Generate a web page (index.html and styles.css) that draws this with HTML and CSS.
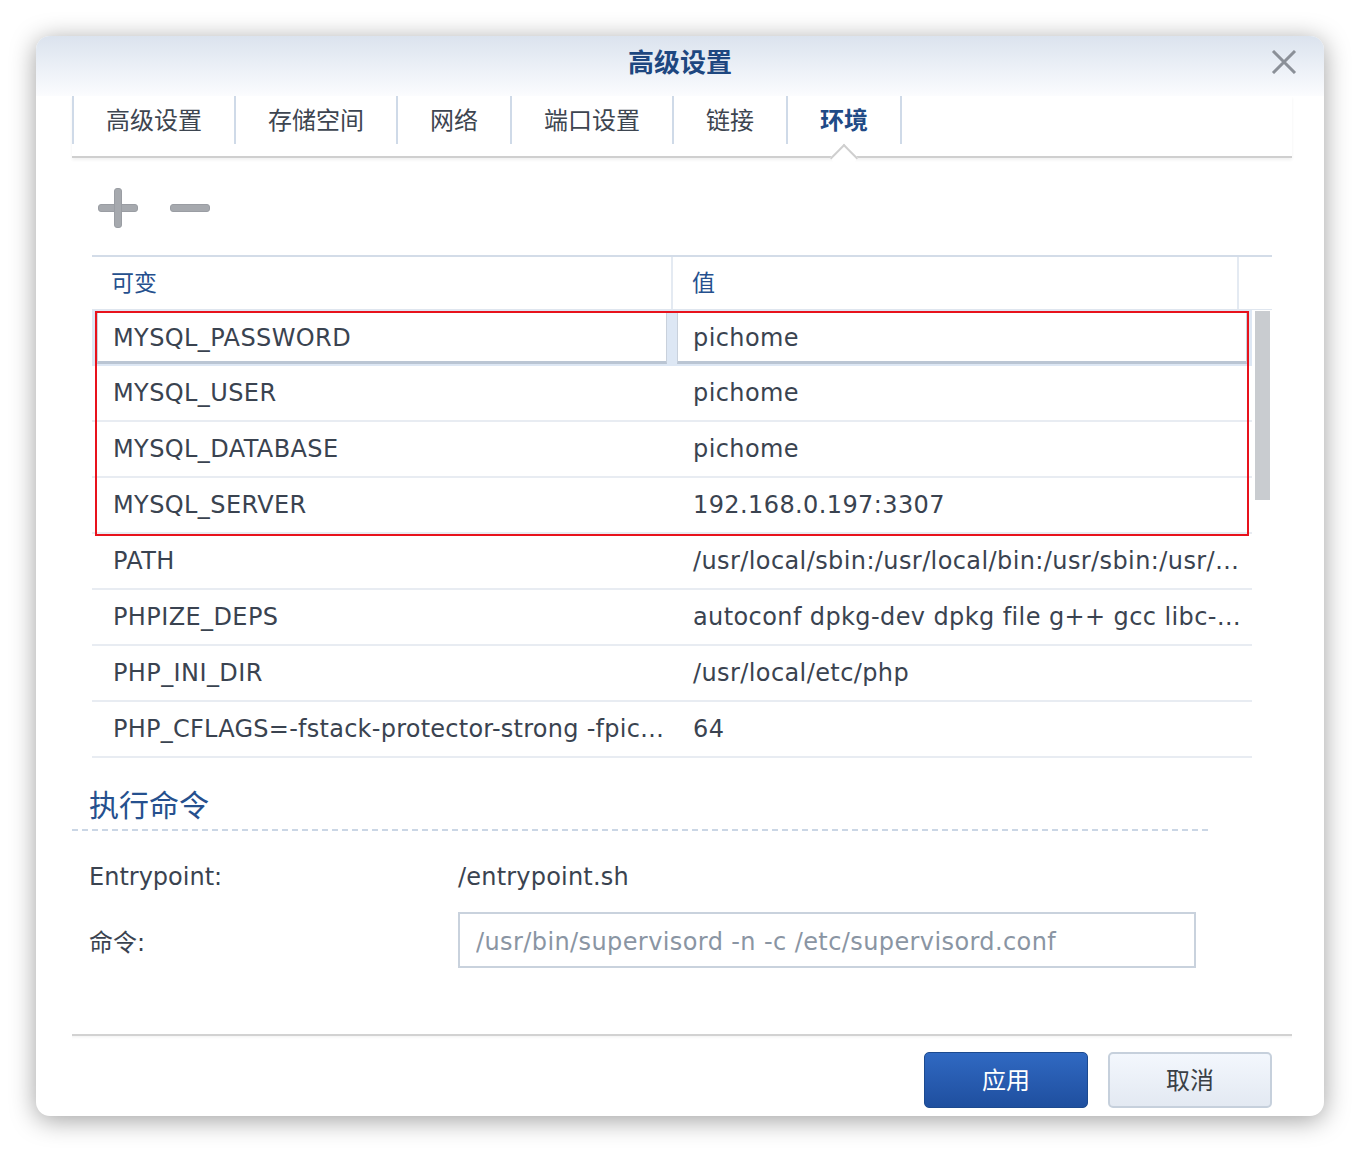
FILE: index.html
```html
<!DOCTYPE html>
<html lang="zh-CN">
<head>
<meta charset="utf-8">
<title>高级设置</title>
<link rel="stylesheet" href="styles.css">
</head>
<body>
<div class="dialog">
  <div class="titlebar">
    <span class="title">高级设置</span>
    <button class="close" aria-label="关闭">
      <svg width="26" height="24" viewBox="0 0 26 24"><path d="M2 1 L24 23 M24 1 L2 23" stroke="#8b9098" stroke-width="3" fill="none"/></svg>
    </button>
  </div>

  <div class="tabs">
    <div class="tab">高级设置</div>
    <div class="tab">存储空间</div>
    <div class="tab">网络</div>
    <div class="tab">端口设置</div>
    <div class="tab">链接</div>
    <div class="tab active">环境</div>
  </div>

  <div class="content">
    <div class="toolbar">
      <span class="icon-btn">
        <svg width="40" height="40" viewBox="0 0 40 40"><rect x="0.5" y="16.5" width="39" height="7" rx="2.5" fill="#a6a9ae" stroke="#9a9da3" stroke-width="1"/><rect x="16.5" y="0.5" width="7" height="39" rx="2.5" fill="#a6a9ae" stroke="#9a9da3" stroke-width="1"/></svg>
      </span>
      <span class="icon-btn">
        <svg width="40" height="40" viewBox="0 0 40 40"><rect x="0.5" y="16.5" width="39" height="7" rx="2.5" fill="#a6a9ae" stroke="#9a9da3" stroke-width="1"/></svg>
      </span>
    </div>

    <div class="grid">
      <div class="grid-head">
        <div class="th c1">可变</div>
        <div class="th c2">值</div>
        <div class="th filler"></div>
      </div>
      <div class="grid-body">
        <div class="rows">
          <div class="row editing">
            <div class="cell c1"><div class="edit">MYSQL_PASSWORD</div></div>
            <div class="cell c2"><div class="edit">pichome</div></div>
          </div>
          <div class="row">
            <div class="cell c1">MYSQL_USER</div>
            <div class="cell c2">pichome</div>
          </div>
          <div class="row">
            <div class="cell c1">MYSQL_DATABASE</div>
            <div class="cell c2">pichome</div>
          </div>
          <div class="row">
            <div class="cell c1">MYSQL_SERVER</div>
            <div class="cell c2">192.168.0.197:3307</div>
          </div>
          <div class="row">
            <div class="cell c1">PATH</div>
            <div class="cell c2">/usr/local/sbin:/usr/local/bin:/usr/sbin:/usr/bin:/sbin:/bin</div>
          </div>
          <div class="row">
            <div class="cell c1">PHPIZE_DEPS</div>
            <div class="cell c2">autoconf dpkg-dev dpkg file g++ gcc libc-dev make pkg-config re2c</div>
          </div>
          <div class="row">
            <div class="cell c1">PHP_INI_DIR</div>
            <div class="cell c2">/usr/local/etc/php</div>
          </div>
          <div class="row">
            <div class="cell c1 tight">PHP_CFLAGS=-fstack-protector-strong -fpic -fpie -O2 -D_LARGEFILE_SOURCE -D_FILE_OFFSET_BITS=</div>
            <div class="cell c2">64</div>
          </div>
        </div>
        <div class="scrollbar"><div class="thumb"></div></div>
      </div>
      <div class="highlight"></div>
    </div>

    <div class="section-title">执行命令</div>
    <div class="dashed"></div>

    <div class="form-row first">
      <div class="label">Entrypoint:</div>
      <div class="value">/entrypoint.sh</div>
    </div>
    <div class="form-row">
      <div class="label">命令:</div>
      <input class="text-input" type="text" placeholder="/usr/bin/supervisord -n -c /etc/supervisord.conf">
    </div>
  </div>

  <div class="footer">
    <button class="btn primary">应用</button>
    <button class="btn">取消</button>
  </div>
</div>
</body>
</html>
```
FILE: styles.css
```css
* { box-sizing: border-box; }

html, body {
  margin: 0;
  padding: 0;
  background: #ffffff;
}

body {
  padding: 36px;
  font-family: "DejaVu Sans", "Noto Sans CJK SC", sans-serif;
  color: #3a4350;
}

.dialog {
  position: relative;
  width: 1288px;
  height: 1080px;
  background: #ffffff;
  border-radius: 14px;
  box-shadow: 0 4px 26px rgba(0, 0, 0, 0.38);
  display: flex;
  flex-direction: column;
  overflow: hidden;
}

/* title bar */
.titlebar {
  height: 60px;
  flex: none;
  display: flex;
  align-items: center;
  justify-content: center;
  padding-bottom: 10px;
  background: linear-gradient(#dbe3ee 0%, #eef2f8 60%, #fbfcfe 100%);
}

.title {
  font-family: "Noto Sans CJK SC", sans-serif;
  font-size: 26px;
  font-weight: 700;
  color: #1e4780;
  line-height: 30px;
}

.close {
  position: absolute;
  right: 27px;
  top: 14px;
  width: 26px;
  height: 24px;
  padding: 0;
  border: 0;
  background: none;
  display: flex;
}

/* tabs */
.tabs {
  flex: none;
  margin: 0 32px 0 36px;
  height: 62px;
  display: flex;
  align-items: flex-start;
  border-bottom: 2px solid #cfcfcf;
  box-shadow: 0 2px 3px rgba(0, 0, 0, 0.06);
  position: relative;
}

.tab {
  position: relative;
  height: 48px;
  padding: 0 32px 3px;
  border-left: 2px solid #cfdae8;
  display: flex;
  align-items: center;
  font-family: "Noto Sans CJK SC", sans-serif;
  font-size: 24px;
  color: #3d4550;
}

.tab:last-child {
  border-right: 2px solid #cfdae8;
}

.tab.active {
  color: #1f4a86;
  font-weight: 700;
}

.tab.active::after {
  content: "";
  position: absolute;
  left: 50%;
  top: 52px;
  width: 18px;
  height: 18px;
  margin-left: -10px;
  background: #ffffff;
  border-top: 2px solid #cfcfcf;
  border-left: 2px solid #cfcfcf;
  transform: rotate(45deg);
  z-index: 2;
}

/* content */
.content {
  flex: none;
  margin: 0 32px 0 36px;
  display: flex;
  flex-direction: column;
}

.toolbar {
  margin: 30px 20px 0 26px;
  height: 40px;
  display: flex;
  gap: 32px;
}

.icon-btn {
  width: 40px;
  height: 40px;
  display: flex;
}

/* grid */
.grid {
  position: relative;
  margin: 27px 20px 0 20px;
  font-size: 24px;
  letter-spacing: 0.4px;
}

.grid-head {
  display: flex;
  height: 55px;
  border-top: 2px solid #d3dce8;
  border-bottom: 1px solid #dfe6ef;
}

.th {
  display: flex;
  align-items: center;
  padding: 0 0 5px 19px;
  font-family: "Noto Sans CJK SC", sans-serif;
  font-size: 23px;
  letter-spacing: 0;
  color: #25508e;
}

.th.c1 {
  width: 581px;
  border-right: 2px solid #e4eaf2;
}

.th.c2 {
  width: 566px;
  border-right: 2px solid #e4eaf2;
}

.th.filler {
  flex: 1;
}

.grid-body {
  display: flex;
}

.rows {
  width: 1160px;
}

.row {
  display: flex;
  height: 56px;
  border-bottom: 2px solid #e8ecf2;
}

.cell {
  display: block;
  white-space: nowrap;
  overflow: hidden;
  text-overflow: ellipsis;
  line-height: 28px;
  padding-top: 13px;
}

.cell.c1 {
  width: 581px;
  padding-left: 21px;
  padding-right: 4px;
}

.cell.c1.tight {
  letter-spacing: 0.25px;
}

.cell.c2 {
  flex: 1;
  min-width: 0;
  padding-left: 20px;
  padding-right: 8px;
}

.row.editing {
  background: #dde7f4;
  border-bottom: 0;
}

.row.editing .cell.c1 {
  padding: 2px 6px 0 5px;
}

.row.editing .cell.c2 {
  padding: 2px 5px 0 4px;
}

.edit {
  height: 52px;
  background: #ffffff;
  border: 1px solid #c9d1dc;
  border-bottom: 3px solid #bac5d3;
  padding: 11px 0 0 15px;
  line-height: 28px;
  overflow: hidden;
  white-space: nowrap;
}

.scrollbar {
  width: 20px;
  padding: 1px 2px 0 3px;
}

.thumb {
  height: 189px;
  background: #c9ccd0;
}

.highlight {
  position: absolute;
  left: 3px;
  top: 56px;
  width: 1154px;
  height: 225px;
  border: 2px solid #e8121c;
  pointer-events: none;
}

/* command section */
.section-title {
  margin-top: 25px;
  padding-left: 17px;
  height: 46px;
  line-height: 40px;
  font-family: "Noto Sans CJK SC", sans-serif;
  font-size: 30px;
  color: #25508e;
}

.dashed {
  height: 2px;
  margin-right: 80px;
  background: repeating-linear-gradient(to right, #cad6e5 0 6px, transparent 6px 10px);
}

.form-row {
  display: flex;
  align-items: center;
  height: 56px;
  padding-left: 17px;
  font-size: 24px;
  color: #3a4350;
}

.form-row.first {
  margin-top: 18px;
  margin-bottom: 7px;
}

.label {
  width: 369px;
}

.value {
  letter-spacing: 0.2px;
}

.text-input {
  width: 738px;
  height: 56px;
  border: 2px solid #c9d2dd;
  padding: 3px 0 0 16px;
  font-family: "DejaVu Sans", sans-serif;
  font-size: 24px;
  letter-spacing: 0.4px;
  color: #3a4350;
  background: #ffffff;
  outline: none;
}

.text-input::placeholder {
  color: #8a95a3;
}

/* footer */
.footer {
  flex: none;
  margin: auto 32px 0 36px;
  height: 82px;
  border-top: 2px solid #d2d2d2;
  box-shadow: inset 0 3px 3px -2px rgba(0, 0, 0, 0.06);
  display: flex;
  justify-content: flex-end;
  align-items: flex-start;
  gap: 20px;
  padding: 16px 20px 0 0;
}

.btn {
  width: 164px;
  height: 56px;
  border-radius: 5px;
  border: 2px solid #c6d0dc;
  background: linear-gradient(#f3f7fd, #e3e9f2);
  font-family: "Noto Sans CJK SC", sans-serif;
  font-size: 24px;
  color: #3a3f46;
  padding: 0 0 3px;
}

.btn.primary {
  border: 1px solid #1c4a8f;
  background: linear-gradient(#3069c2, #1f4f9f);
  color: #ffffff;
}
```
